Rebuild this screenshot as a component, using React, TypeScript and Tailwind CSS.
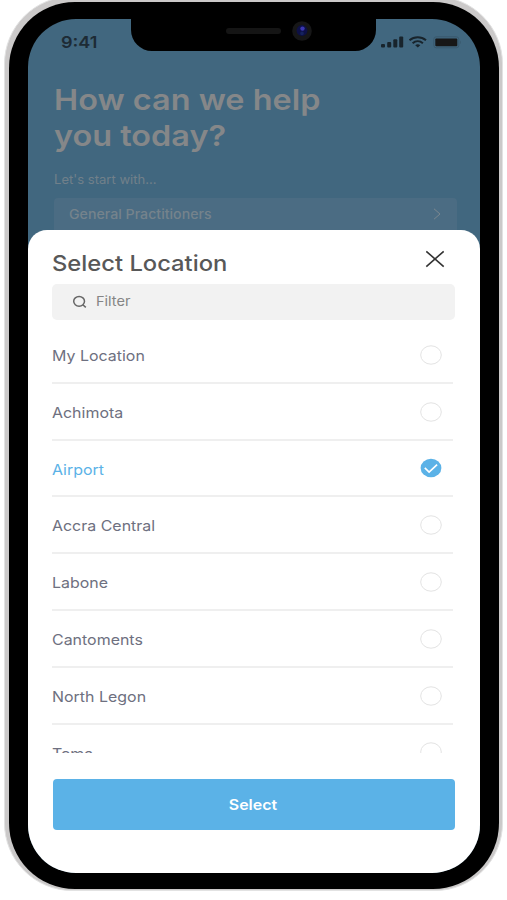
import React from "react";

const locations = [
  "My Location",
  "Achimota",
  "Airport",
  "Accra Central",
  "Labone",
  "Cantoments",
  "North Legon",
  "Tema",
];

const Radio = ({ checked }: { checked: boolean }) => (
  <svg width="22" height="20" viewBox="0 0 22 20" fill="none">
    {checked ? (
      <>
        <ellipse cx="11" cy="10" rx="10.4" ry="9.3" fill="#5bb2e7" />
        <path d="M4.8 9.9l4.3 4.1 8-7.4" stroke="#fff" strokeWidth="1.7" />
      </>
    ) : (
      <ellipse cx="11" cy="10" rx="10.3" ry="9.2" stroke="#e3e3e3" />
    )}
  </svg>
);

const LocationRow = ({
  name,
  selected,
}: {
  name: string;
  selected: boolean;
}) => (
  <li className="flex h-[56.8px] w-[401px] shrink-0 items-center justify-between border-b-2 border-[#efefef] pt-px pr-[11px]">
    <span
      className={`origin-left scale-x-[1.1] pt-0.5 text-[14.5px] ${selected ? "text-[#5bb2e7]" : "text-[#6e7080]"}`}
    >
      {name}
    </span>
    <Radio checked={selected} />
  </li>
);

const Notch = () => (
  <div className="absolute top-0 left-[103px] h-8 w-[245px] rounded-b-[21px] bg-black">
    <div className="absolute top-[9px] left-[95px] h-1.5 w-[55px] rounded-full bg-[#151515]" />
    <svg
      className="absolute top-[2px] left-[161px]"
      width="20"
      height="20"
      viewBox="0 0 20 20"
    >
      <circle cx="10" cy="10" r="9.8" fill="#161617" />
      <circle cx="10" cy="9.5" r="5.4" fill="#0d1046" />
      <circle cx="10.5" cy="7.6" r="2.2" fill="#3a36b0" />
      <circle cx="10" cy="12.4" r="1.8" fill="#15225e" />
    </svg>
  </div>
);

const StatusBar = () => (
  <div className="flex h-[46px] items-center justify-between pr-[19px] pl-[33px]">
    <span className="origin-left scale-x-[1.13] text-[16px] font-semibold text-[#1d2b35]">
      9:41
    </span>
    <svg width="80" height="14" viewBox="0 0 80 14" fill="#18242c">
      <rect x="0" y="9" width="4" height="3.6" rx="1" />
      <rect x="6.2" y="7" width="4" height="5.6" rx="1" />
      <rect x="12.3" y="4.3" width="4" height="8.3" rx="1" />
      <rect x="18.2" y="1.6" width="4" height="11" rx="1" />
      <g fill="none" stroke="#18242c" strokeWidth="2">
        <path d="M28.5 5.2c4.8-4.1 11.7-4.1 16.5 0" />
        <path d="M31.6 8.3c3-2.6 7.3-2.6 10.3 0" />
      </g>
      <path d="M34.2 10.2c1.5-1.2 3.6-1.2 5.1 0l-2.5 2.4z" />
      <rect
        x="52.8"
        y="1.8"
        width="25"
        height="11"
        rx="2.5"
        fill="none"
        stroke="#3a596d"
      />
      <path d="M79 5.5v3.6c1-.5 1-3.1 0-3.6z" fill="#3a596d" />
      <rect x="54.3" y="3.4" width="22" height="7.9" rx="1" fill="#171717" />
    </svg>
  </div>
);

const SelectLocationSheet = () => (
  <section className="absolute inset-x-0 top-[211px] bottom-0 flex flex-col rounded-t-[19px] bg-white pl-6">
    <div className="flex h-[54px] items-center justify-between pt-3 pr-[35px]">
      <h2 className="origin-left scale-x-[1.08] text-[22px] font-medium text-[#585858]">
        Select Location
      </h2>
      <svg
        className="mb-2"
        width="20"
        height="18"
        viewBox="0 0 20 18"
        stroke="#333"
        strokeWidth="1.6"
      >
        <path d="M1.3 1.3l17.4 15.4M18.7 1.3L1.3 16.7" />
      </svg>
    </div>
    <div className="flex h-9 w-[403px] items-center rounded-[5px] bg-[#f2f2f2] pl-[20px]">
      <svg
        width="16"
        height="14"
        viewBox="0 0 16 14"
        fill="none"
        stroke="#666"
        strokeWidth="1.5"
      >
        <ellipse cx="7.1" cy="6.3" rx="5.4" ry="4.9" />
        <path d="M10.8 9.7l3 2.7" />
      </svg>
      <span className="ml-2 origin-left scale-x-[1.12] text-[13px] text-[#858585]">
        Filter
      </span>
    </div>
    <ul className="mt-[7px] flex h-[426px] flex-col overflow-hidden">
      {locations.map((name) => (
        <LocationRow key={name} name={name} selected={name === "Airport"} />
      ))}
    </ul>
    <button className="mt-[26px] ml-px h-[51px] w-[402px] rounded bg-[#5bb2e7] pr-0.5 text-[14.5px] font-semibold text-white">
      <span className="inline-block scale-x-[1.1]">Select</span>
    </button>
  </section>
);

export default function App() {
  return (
    <main className="h-[900px] w-[507px] overflow-hidden bg-white pl-1 font-['Inter',sans-serif]">
      <div className="-mt-1 h-[895px] w-[498.5px] rounded-[68px] border border-[#e2e2e2] bg-[#cbc9c9] pt-[5px] pl-1">
        <div className="h-[887px] w-[489.5px] rounded-[66px] bg-black pt-[17px] pl-[19px]">
          <div className="relative h-[854px] w-[451.5px] overflow-hidden rounded-[48px] bg-[#41677f]">
            <StatusBar />
            <Notch />
            <div className="pt-[17px] pl-[26px] text-[#858789]">
              <h1 className="origin-left scale-x-[1.118] text-[29px] leading-[35.5px] font-semibold">
                How can we help
                <br />
                you today?
              </h1>
              <p className="mt-[17px] origin-left scale-x-[1.045] text-[12.5px] leading-5 text-[#71808a]">
                Let's start with...
              </p>
              <div className="mt-2 flex h-10 w-[403px] items-start justify-between rounded bg-[#4b6c83] pt-1.5 pr-4 pl-[15px]">
                <span className="origin-left scale-x-[1.09] text-[13px] leading-5 font-medium text-[#75838c]">
                  General Practitioners
                </span>
                <svg
                  className="mt-1"
                  width="8"
                  height="12"
                  viewBox="0 0 8 12"
                  fill="none"
                  stroke="#7b878f"
                >
                  <path d="M1 .8l6 5.2-6 5.2" />
                </svg>
              </div>
            </div>
            <SelectLocationSheet />
          </div>
        </div>
      </div>
    </main>
  );
}
